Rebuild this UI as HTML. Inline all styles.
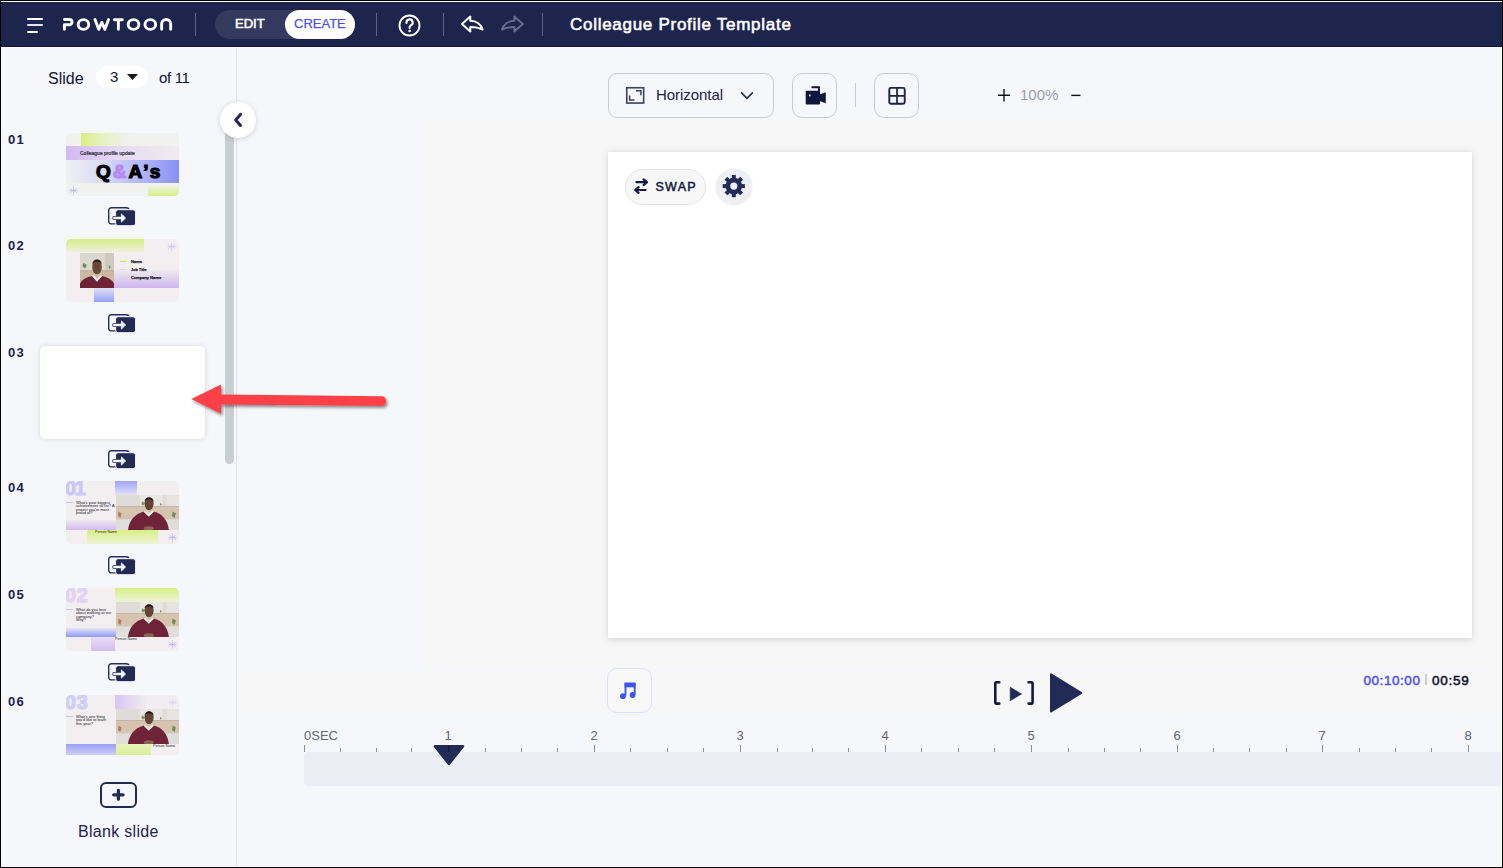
<!DOCTYPE html>
<html><head><meta charset="utf-8">
<style>
*{box-sizing:border-box;margin:0;padding:0}
html,body{width:1503px;height:868px;overflow:hidden;background:#000}
body{font-family:"Liberation Sans",sans-serif;position:relative}
.a{position:absolute}
.sep{position:absolute;width:1px;background:#5d6488}
.tb{position:absolute;border:1px solid #c8cad4;border-radius:10px;background:#f6f7fb}
.num{position:absolute;left:8px;margin-top:1px;font-size:13px;font-weight:bold;color:#1b2250;letter-spacing:1.2px}
.th{position:absolute;left:66px;width:113px;height:63px;border-radius:5px;overflow:hidden;background:#f3eff1}
.tr{position:absolute;left:108px;width:28px;height:19px}
.tick{position:absolute;width:1px;background:#8a8f9c}
.lbl{position:absolute;top:728px;font-size:13px;color:#5f6573}
</style></head>
<body>
<!-- frame -->
<div class="a" style="left:1px;top:1px;width:1501px;height:866px;background:#fff"></div>
<div class="a" style="left:2px;top:48px;width:1499px;height:818px;background:#f6f7fb"></div>

<!-- top bar -->
<div class="a" style="left:1px;top:2px;width:1501px;height:45px;background:#1e254d;border-bottom:1px solid #0c1444"></div>


<!-- hamburger -->
<div class="a" style="left:27px;top:18px;width:16px;height:2px;background:#fff;border-radius:1px"></div>
<div class="a" style="left:27px;top:24.4px;width:16px;height:2px;background:#e6e7ee;border-radius:1px"></div>
<div class="a" style="left:27px;top:31px;width:11px;height:2px;background:#fff;border-radius:1px"></div>
<!-- logo -->
<svg class="a" style="left:0;top:0" width="200" height="46" viewBox="0 0 200 46">
 <g fill="none" stroke="#fff" stroke-width="2.9" stroke-linecap="round" stroke-linejoin="round">
  <path d="M64.4 19.55 H69.4 A2.6 2.6 0 0 1 69.4 24.75 H64.4 V29.35"/>
  <ellipse cx="83.45" cy="24.5" rx="5.3" ry="4.85"/>
  <path d="M94.95 19.6 L98.7 29.35 L101.8 22.4 L104.9 29.35 L108.55 19.6"/>
  <path d="M114.45 19.75 H122.35 M118.4 19.75 V29.35"/>
  <ellipse cx="133.5" cy="24.5" rx="5.35" ry="4.85"/>
  <ellipse cx="150.3" cy="24.5" rx="5.35" ry="4.85"/>
  <path d="M161.65 29.35 V24.05 A4.5 4.5 0 0 1 170.65 24.05 V29.35"/>
 </g>
</svg>
<div class="sep" style="left:195px;top:13px;height:23px"></div>
<!-- toggle -->
<div class="a" style="left:215px;top:10px;width:140px;height:29px;border-radius:15px;background:#333a5e"></div>
<div class="a" style="left:285px;top:10px;width:70px;height:29px;border-radius:15px;background:#fff"></div>
<div class="a" style="left:235px;top:12px;line-height:23px;font-size:13px;color:#fff;-webkit-text-stroke:0.55px #fff">EDIT</div>
<div class="a" style="left:294px;top:12px;line-height:23px;font-size:13px;color:#4b4ff0;-webkit-text-stroke:0.25px #4b4ff0">CREATE</div>
<div class="sep" style="left:376px;top:13px;height:23px"></div>
<!-- help -->
<svg class="a" style="left:395px;top:11px" width="30" height="30" viewBox="0 0 30 30">
 <circle cx="14.5" cy="14.5" r="10" fill="none" stroke="#fff" stroke-width="1.9"/>
 <path d="M11.5 11.9 A3.1 3.1 0 1 1 15.8 14.4 C14.9 14.9 14.6 15.4 14.6 16.4 V17.1" fill="none" stroke="#fff" stroke-width="2.1" stroke-linecap="round"/>
 <circle cx="14.6" cy="19.9" r="1.25" fill="#fff"/>
</svg>
<div class="sep" style="left:443px;top:13px;height:23px"></div>
<!-- undo redo -->
<svg class="a" style="left:0;top:0" width="560" height="46" viewBox="0 0 560 46">
 <path d="M462 24 L470.3 16.6 V20.7 C476.5 20.9 481.2 24.5 482.6 29.6 C479.3 27.8 475.6 27 470.3 27 V31.6 Z" fill="none" stroke="#fff" stroke-width="2" stroke-linejoin="round"/>
 <path d="M522.7 24 L514.4 16.6 V20.7 C508.2 20.9 503.5 24.5 502.1 29.6 C505.4 27.8 509.1 27 514.4 27 V31.6 Z" fill="none" stroke="#666c8f" stroke-width="2" stroke-linejoin="round"/>
</svg>
<div class="sep" style="left:542px;top:13px;height:23px"></div>
<div class="a" style="left:570px;top:16px;line-height:17px;font-size:17px;color:#fff;letter-spacing:0.72px;white-space:nowrap;-webkit-text-stroke:0.55px #fff">Colleague Profile Template</div>


<!-- sidebar -->
<div class="a" style="left:236px;top:48px;width:1px;height:818px;background:#dfe1e8"></div>
<div class="a" style="left:48px;top:66.5px;line-height:24px;font-size:16px;color:#0f1433">Slide</div>
<div class="a" style="left:96px;top:66px;width:52px;height:22px;border-radius:11px;background:#fff"></div>
<div class="a" style="left:110px;top:65px;line-height:24px;font-size:15px;color:#0f1433">3</div>
<svg class="a" style="left:126px;top:73px" width="13" height="8" viewBox="0 0 13 8"><path d="M1 0.9 H12 L6.5 7 Z" fill="#1a1a1a"/></svg>
<div class="a" style="left:159px;top:66px;line-height:24px;font-size:15px;color:#0f1433;letter-spacing:-0.35px">of 11</div>

<div class="a" style="left:0;top:107px;width:236px;height:648px;overflow:hidden">
 <div class="a" style="left:-0px;top:-107px;width:236px;height:900px">
  <div class="num" style="top:131px">01</div>
  <div class="th" style="top:133px;background:#f1f1f0">
    <div class="a" style="left:15px;top:0;width:50px;height:13px;background:linear-gradient(90deg,#d9ef85,#e6f1bd 40%,rgba(241,241,240,0))"></div>
    <div class="a" style="left:0;top:13px;width:113px;height:14px;background:linear-gradient(90deg,#d2b9f1,#e6d9f2 45%,#f0ecf0)"></div>
    <div class="a" style="left:0;top:27px;width:113px;height:23px;background:linear-gradient(90deg,#f1f1f0,#d6d9f7 35%,#a8aef6 75%,#8790f2)"></div>
    <div class="a" style="left:82px;top:53px;width:31px;height:10px;background:linear-gradient(180deg,#f0f3dc,#d8ef8a)"></div>
    <div class="a" style="left:14px;top:16.5px;font-size:4.95px;line-height:7px;color:#2a2833;white-space:nowrap;letter-spacing:0.05px;-webkit-text-stroke:0.2px #2a2833">Colleague profile update</div>
    <div class="a" style="left:30px;top:27px;line-height:23px;font-size:19px;font-weight:bold;color:#000;letter-spacing:2px;font-family:'Liberation Sans';-webkit-text-stroke:1.2px #000">Q<span style="color:#b887f0;-webkit-text-stroke-color:#b887f0">&amp;</span>A&#8217;s</div>
    <svg class="a" style="left:3px;top:53px" width="9" height="9" viewBox="0 0 10 10"><g stroke="#b6b2ee" stroke-width="0.7" stroke-linecap="round"><path d="M5 0.8V9.2M1.4 2.9L8.6 7.1M1.4 7.1L8.6 2.9M0.8 5H9.2"/></g></svg>
  </div>
  <svg class="tr" style="top:207px" viewBox="0 0 28 19" width="28" height="19">
<rect x="0.7" y="0.7" width="20.2" height="16.2" rx="2.6" fill="none" stroke="#262f5a" stroke-width="1.4"/>
<rect x="7.6" y="2.7" width="20" height="16" rx="2.6" fill="#232b55" stroke="#f6f7fb" stroke-width="1"/>
<path d="M6.3 11 H15" stroke="#232b55" stroke-width="4.2" stroke-linecap="round"/>
<path d="M6.3 11 H15" stroke="#f6f7fb" stroke-width="2.4" stroke-linecap="round"/>
<path d="M13.4 6.9 L17.6 11 L13.4 15.1 Z" fill="#f6f7fb" stroke="#f6f7fb" stroke-width="0.8" stroke-linejoin="round"/>
</svg>

  <div class="num" style="top:237px">02</div>
  <div class="th" style="top:239px">
    <div class="a" style="left:0;top:0;width:78px;height:13px;background:linear-gradient(180deg,#d6ee86,#eef0dc)"></div>
    <div class="a" style="left:48px;top:30px;width:65px;height:19px;background:linear-gradient(180deg,#f1edf0,#cdb5ef)"></div>
    <div class="a" style="left:28px;top:49px;width:20px;height:14px;background:linear-gradient(180deg,#dfe1f6,#98a2f6)"></div>
    <svg class="a" style="left:14px;top:14px" width="34" height="35" viewBox="0 0 100 100" preserveAspectRatio="none">
<rect width="100" height="100" fill="#dcd8d0"/><rect x="74" width="26" height="50" fill="#cfc9c0"/><rect y="50" width="100" height="3" fill="#a99580"/><rect y="53" width="100" height="30" fill="#cdb8a2"/>
<path d="M10 28 L20 34 L15 44 L7 38Z" fill="#6f8a5c"/><path d="M84 34 L91 40 L86 46Z" fill="#6f8a5c"/>
<path d="M-5 100 C0 78 16 70 36 66 L50 78 L64 66 C84 70 100 78 105 100 Z" fill="#6e2339"/>
<path d="M35 66 L50 82 L65 66 L59 63 L50 74 L41 63Z" fill="#efebe7"/>
<ellipse cx="50" cy="40" rx="14" ry="21" fill="#6a4738"/><path d="M36 32 C37 15 63 13 64 32 C58 22 42 22 36 32Z" fill="#261a15"/>
</svg>
    <div class="a" style="left:54px;top:22px;width:7px;height:1px;background:#cde87a"></div>
    <div class="a" style="left:54px;top:30px;width:7px;height:1px;background:#ddd"></div>
    <div class="a" style="left:54px;top:38px;width:7px;height:1px;background:#d8d0ee"></div>
    <div class="a" style="left:65px;top:20px;font-size:4.2px;line-height:5px;color:#111;white-space:nowrap;-webkit-text-stroke:0.25px #111">Name</div>
    <div class="a" style="left:65px;top:28px;font-size:4.2px;line-height:5px;color:#111;white-space:nowrap;-webkit-text-stroke:0.25px #111">Job Title</div>
    <div class="a" style="left:65px;top:36px;font-size:4.2px;line-height:5px;color:#111;white-space:nowrap;-webkit-text-stroke:0.25px #111">Company Name</div>
    <svg class="a" style="left:101px;top:3px" width="9" height="9" viewBox="0 0 10 10"><g stroke="#c8c2f2" stroke-width="0.7" stroke-linecap="round"><path d="M5 0.8V9.2M1.4 2.9L8.6 7.1M1.4 7.1L8.6 2.9M0.8 5H9.2"/></g></svg>
  </div>
  <svg class="tr" style="top:314px" viewBox="0 0 28 19" width="28" height="19">
<rect x="0.7" y="0.7" width="20.2" height="16.2" rx="2.6" fill="none" stroke="#262f5a" stroke-width="1.4"/>
<rect x="7.6" y="2.7" width="20" height="16" rx="2.6" fill="#232b55" stroke="#f6f7fb" stroke-width="1"/>
<path d="M6.3 11 H15" stroke="#232b55" stroke-width="4.2" stroke-linecap="round"/>
<path d="M6.3 11 H15" stroke="#f6f7fb" stroke-width="2.4" stroke-linecap="round"/>
<path d="M13.4 6.9 L17.6 11 L13.4 15.1 Z" fill="#f6f7fb" stroke="#f6f7fb" stroke-width="0.8" stroke-linejoin="round"/>
</svg>

  <div class="num" style="top:344px">03</div>
  <div class="a" style="left:40px;top:346px;width:165px;height:93px;border-radius:5px;background:#fff;box-shadow:0 0 5px rgba(40,45,70,0.16)"></div>
  <svg class="tr" style="top:450px" viewBox="0 0 28 19" width="28" height="19">
<rect x="0.7" y="0.7" width="20.2" height="16.2" rx="2.6" fill="none" stroke="#262f5a" stroke-width="1.4"/>
<rect x="7.6" y="2.7" width="20" height="16" rx="2.6" fill="#232b55" stroke="#f6f7fb" stroke-width="1"/>
<path d="M6.3 11 H15" stroke="#232b55" stroke-width="4.2" stroke-linecap="round"/>
<path d="M6.3 11 H15" stroke="#f6f7fb" stroke-width="2.4" stroke-linecap="round"/>
<path d="M13.4 6.9 L17.6 11 L13.4 15.1 Z" fill="#f6f7fb" stroke="#f6f7fb" stroke-width="0.8" stroke-linejoin="round"/>
</svg>

  <div class="num" style="top:479px">04</div>
  <div class="th" style="top:481px">
    <div class="a" style="left:49px;top:0;width:22px;height:14px;background:linear-gradient(180deg,#9ea5f7,#e3e2f4)"></div>
    <div class="a" style="left:0;top:39px;width:50px;height:10px;background:linear-gradient(180deg,#efeaf2,#d2bbf1)"></div>
    <div class="a" style="left:21px;top:49px;width:71px;height:14px;background:linear-gradient(180deg,#d8ef86,#eef2d5)"></div>
    <svg class="a" style="left:50px;top:14px" width="63" height="35" viewBox="0 0 100 55" preserveAspectRatio="none">
<rect width="100" height="55" fill="#dfdcd7"/><rect x="38" width="36" height="18" fill="#e9e7e3"/><rect x="80" width="20" height="18" fill="#e6e4e0"/><rect y="18" width="100" height="1.2" fill="#a99680"/><rect y="19.2" width="100" height="18" fill="#d6c4ae"/><rect y="37.2" width="100" height="1.2" fill="#c4b6a6"/><rect y="38.4" width="100" height="16.6" fill="#e0dedb"/>
<path d="M42 10 L46 13 L43 17 L40 14Z" fill="#789166"/><path d="M70 12 L73 15 L70 17Z" fill="#6d8a5a"/><path d="M90 26 L95 29 L93 36 L89 33Z" fill="#6d8a5a"/><path d="M4 26 L9 29 L7 36 L3 33Z" fill="#b0806a"/>
<path d="M19 55 C21 40 30 30 44 26 L52 32 L60 26 C73 29 82 39 84 55 Z" fill="#6e2339"/>
<path d="M43.5 26 L52 34 L60.5 26 L57.5 25 L52 30 L46.5 25Z" fill="#f0ece8"/>
<ellipse cx="52.5" cy="13.5" rx="7.2" ry="10.5" fill="#634335"/><path d="M45.3 10 C45.6 2 59.4 1.5 59.7 10 C56.5 6 48.5 6 45.3 10Z" fill="#231914"/>
<ellipse cx="52" cy="52.5" rx="8" ry="3.2" fill="#8a6553"/>
</svg>
    <div class="a" style="left:-1px;top:-1px;line-height:17px;font-size:19.5px;font-weight:bold;color:#c6c8f5;letter-spacing:-1.2px;-webkit-text-stroke:1px #c6c8f5">01</div>
    <div class="a" style="left:0;top:21px;width:7px;height:1px;background:#c9c5ef"></div>
    <div class="a" style="left:10px;top:20px;width:40px;font-size:3.9px;line-height:3.4px;color:#111;white-space:pre">What's your biggest
achievement so far? A
project you're most
proud of?</div>
    <div class="a" style="left:29px;top:48.5px;font-size:3.6px;line-height:4px;color:#222;white-space:nowrap">Person Name</div>
    <svg class="a" style="left:102px;top:52px" width="9" height="9" viewBox="0 0 10 10"><g stroke="#b7b0f0" stroke-width="0.7" stroke-linecap="round"><path d="M5 0.8V9.2M1.4 2.9L8.6 7.1M1.4 7.1L8.6 2.9M0.8 5H9.2"/></g></svg>
  </div>
  <svg class="tr" style="top:556px" viewBox="0 0 28 19" width="28" height="19">
<rect x="0.7" y="0.7" width="20.2" height="16.2" rx="2.6" fill="none" stroke="#262f5a" stroke-width="1.4"/>
<rect x="7.6" y="2.7" width="20" height="16" rx="2.6" fill="#232b55" stroke="#f6f7fb" stroke-width="1"/>
<path d="M6.3 11 H15" stroke="#232b55" stroke-width="4.2" stroke-linecap="round"/>
<path d="M6.3 11 H15" stroke="#f6f7fb" stroke-width="2.4" stroke-linecap="round"/>
<path d="M13.4 6.9 L17.6 11 L13.4 15.1 Z" fill="#f6f7fb" stroke="#f6f7fb" stroke-width="0.8" stroke-linejoin="round"/>
</svg>

  <div class="num" style="top:586px">05</div>
  <div class="th" style="top:588px">
    <div class="a" style="left:49px;top:0;width:64px;height:14px;background:linear-gradient(180deg,#d7ef86,#eef2d6)"></div>
    <div class="a" style="left:0;top:40px;width:50px;height:9px;background:linear-gradient(180deg,#e6e6f6,#9098f4)"></div>
    <div class="a" style="left:25px;top:49px;width:24px;height:14px;background:linear-gradient(180deg,#e9def4,#d3bdf1)"></div>
    <svg class="a" style="left:50px;top:14px" width="63" height="35" viewBox="0 0 100 55" preserveAspectRatio="none">
<rect width="100" height="55" fill="#dfdcd7"/><rect x="38" width="36" height="18" fill="#e9e7e3"/><rect x="80" width="20" height="18" fill="#e6e4e0"/><rect y="18" width="100" height="1.2" fill="#a99680"/><rect y="19.2" width="100" height="18" fill="#d6c4ae"/><rect y="37.2" width="100" height="1.2" fill="#c4b6a6"/><rect y="38.4" width="100" height="16.6" fill="#e0dedb"/>
<path d="M42 10 L46 13 L43 17 L40 14Z" fill="#789166"/><path d="M70 12 L73 15 L70 17Z" fill="#6d8a5a"/><path d="M90 26 L95 29 L93 36 L89 33Z" fill="#6d8a5a"/><path d="M4 26 L9 29 L7 36 L3 33Z" fill="#b0806a"/>
<path d="M19 55 C21 40 30 30 44 26 L52 32 L60 26 C73 29 82 39 84 55 Z" fill="#6e2339"/>
<path d="M43.5 26 L52 34 L60.5 26 L57.5 25 L52 30 L46.5 25Z" fill="#f0ece8"/>
<ellipse cx="52.5" cy="13.5" rx="7.2" ry="10.5" fill="#634335"/><path d="M45.3 10 C45.6 2 59.4 1.5 59.7 10 C56.5 6 48.5 6 45.3 10Z" fill="#231914"/>
<ellipse cx="52" cy="52.5" rx="8" ry="3.2" fill="#8a6553"/>
</svg>
    <div class="a" style="left:-1px;top:-1px;line-height:17px;font-size:19.5px;font-weight:bold;color:#e0d3f5;letter-spacing:1px;-webkit-text-stroke:1.4px #e0d3f5">02</div>
    <div class="a" style="left:0;top:21px;width:7px;height:1px;background:#c9c5ef"></div>
    <div class="a" style="left:10px;top:20px;width:40px;font-size:3.9px;line-height:3.4px;color:#111;white-space:pre">What do you love
about working at our
company?
Why?</div>
    <div class="a" style="left:49px;top:48.5px;font-size:3.6px;line-height:4px;color:#222;white-space:nowrap">Person Name</div>
    <svg class="a" style="left:102px;top:52px" width="9" height="9" viewBox="0 0 10 10"><g stroke="#b7b0f0" stroke-width="0.7" stroke-linecap="round"><path d="M5 0.8V9.2M1.4 2.9L8.6 7.1M1.4 7.1L8.6 2.9M0.8 5H9.2"/></g></svg>
  </div>
  <svg class="tr" style="top:663px" viewBox="0 0 28 19" width="28" height="19">
<rect x="0.7" y="0.7" width="20.2" height="16.2" rx="2.6" fill="none" stroke="#262f5a" stroke-width="1.4"/>
<rect x="7.6" y="2.7" width="20" height="16" rx="2.6" fill="#232b55" stroke="#f6f7fb" stroke-width="1"/>
<path d="M6.3 11 H15" stroke="#232b55" stroke-width="4.2" stroke-linecap="round"/>
<path d="M6.3 11 H15" stroke="#f6f7fb" stroke-width="2.4" stroke-linecap="round"/>
<path d="M13.4 6.9 L17.6 11 L13.4 15.1 Z" fill="#f6f7fb" stroke="#f6f7fb" stroke-width="0.8" stroke-linejoin="round"/>
</svg>

  <div class="num" style="top:693px">06</div>
  <div class="th" style="top:695px;border-radius:5px 5px 0 0">
    <div class="a" style="left:49px;top:0;width:64px;height:14px;background:linear-gradient(90deg,#d8c5f4,#f1edf0 50%)"></div>
    <div class="a" style="left:0;top:49px;width:50px;height:14px;background:linear-gradient(180deg,#9aa0f6,#dcdcf4)"></div>
    <div class="a" style="left:50px;top:49px;width:35px;height:14px;background:linear-gradient(180deg,#e6f3bf,#d8ef8a)"></div>
    <svg class="a" style="left:50px;top:14px" width="63" height="35" viewBox="0 0 100 55" preserveAspectRatio="none">
<rect width="100" height="55" fill="#dfdcd7"/><rect x="38" width="36" height="18" fill="#e9e7e3"/><rect x="80" width="20" height="18" fill="#e6e4e0"/><rect y="18" width="100" height="1.2" fill="#a99680"/><rect y="19.2" width="100" height="18" fill="#d6c4ae"/><rect y="37.2" width="100" height="1.2" fill="#c4b6a6"/><rect y="38.4" width="100" height="16.6" fill="#e0dedb"/>
<path d="M42 10 L46 13 L43 17 L40 14Z" fill="#789166"/><path d="M70 12 L73 15 L70 17Z" fill="#6d8a5a"/><path d="M90 26 L95 29 L93 36 L89 33Z" fill="#6d8a5a"/><path d="M4 26 L9 29 L7 36 L3 33Z" fill="#b0806a"/>
<path d="M19 55 C21 40 30 30 44 26 L52 32 L60 26 C73 29 82 39 84 55 Z" fill="#6e2339"/>
<path d="M43.5 26 L52 34 L60.5 26 L57.5 25 L52 30 L46.5 25Z" fill="#f0ece8"/>
<ellipse cx="52.5" cy="13.5" rx="7.2" ry="10.5" fill="#634335"/><path d="M45.3 10 C45.6 2 59.4 1.5 59.7 10 C56.5 6 48.5 6 45.3 10Z" fill="#231914"/>
<ellipse cx="52" cy="52.5" rx="8" ry="3.2" fill="#8a6553"/>
</svg>
    <div class="a" style="left:-1px;top:-1px;line-height:17px;font-size:19.5px;font-weight:bold;color:#cfd0f6;letter-spacing:1px;-webkit-text-stroke:1.4px #cfd0f6">03</div>
    <div class="a" style="left:0;top:21px;width:7px;height:1px;background:#c9c5ef"></div>
    <div class="a" style="left:10px;top:20px;width:40px;font-size:3.9px;line-height:3.4px;color:#111;white-space:pre">What's one thing
you'd like to learn
this year?</div>
    <div class="a" style="left:87px;top:48.5px;font-size:3.6px;line-height:4px;color:#222;white-space:nowrap">Person Name</div>
    <svg class="a" style="left:102px;top:3px" width="9" height="9" viewBox="0 0 10 10"><g stroke="#d6d0f4" stroke-width="0.7" stroke-linecap="round"><path d="M5 0.8V9.2M1.4 2.9L8.6 7.1M1.4 7.1L8.6 2.9M0.8 5H9.2"/></g></svg>
  </div>
 </div>
</div>

<!-- scrollbar -->
<div class="a" style="left:225px;top:110px;width:9px;height:354px;border-radius:4.5px;background:#c9ced3"></div>
<!-- collapse -->
<div class="a" style="left:220px;top:102px;width:36px;height:36px;border-radius:50%;background:#fff;box-shadow:0 1px 5px rgba(30,35,70,0.18)"></div>
<svg class="a" style="left:230px;top:110px" width="16" height="20" viewBox="0 0 16 20"><path d="M10.5 4.4 L5.7 9.9 L10.5 15.4" fill="none" stroke="#222a55" stroke-width="3.1" stroke-linecap="round" stroke-linejoin="round"/></svg>

<!-- blank slide -->
<div class="a" style="left:100px;top:782px;width:37px;height:26px;border:2.4px solid #232b55;border-radius:6px"></div>
<svg class="a" style="left:100px;top:782px" width="37" height="26" viewBox="0 0 37 26"><path d="M18.4 8.4 V17.2 M13.7 12.8 H23.1" stroke="#232b55" stroke-width="3.3" stroke-linecap="round"/></svg>
<div class="a" style="left:78px;top:821.5px;line-height:20px;font-size:16px;color:#1d2450;letter-spacing:0.3px">Blank slide</div>


<!-- main -->
<div class="a" style="left:423px;top:119px;width:1078px;height:551px;background:#f7f7f8"></div>
<div class="a" style="left:240px;top:673px;width:1261px;height:40px;background:#f7f7f8"></div>

<!-- toolbar -->
<div class="tb" style="left:608px;top:73px;width:166px;height:45px;border-radius:9px"></div>
<svg class="a" style="left:624px;top:85px" width="22" height="20" viewBox="0 0 22 20">
 <rect x="2.75" y="2.75" width="16.9" height="15.3" fill="none" stroke="#3a405f" stroke-width="1.6"/>
 <path d="M11.8 5.8 H16.9 V10.3 M5.6 10.5 V15 H10.5" fill="none" stroke="#3a405f" stroke-width="1.5"/>
</svg>
<div class="a" style="left:656px;top:85px;line-height:20px;font-size:15px;color:#1c2247;letter-spacing:-0.05px">Horizontal</div>
<svg class="a" style="left:738px;top:88px" width="18" height="14" viewBox="0 0 18 14"><path d="M3.6 4.9 L9 10.4 L14.4 4.9" fill="none" stroke="#2b3150" stroke-width="1.7" stroke-linecap="round" stroke-linejoin="round"/></svg>

<div class="tb" style="left:792px;top:73px;width:45px;height:45px"></div>
<svg class="a" style="left:802px;top:84px" width="26" height="24" viewBox="0 0 26 24">
 <path d="M9.5 3.3 H17 V7" fill="none" stroke="#0f1640" stroke-width="1.9"/>
 <rect x="3.7" y="6.8" width="14.3" height="13.7" rx="1" fill="#0f1640"/>
 <path d="M17.5 10.5 L23.8 8.2 V19.2 L17.5 17 Z" fill="#0f1640"/>
 <rect x="7" y="10.5" width="1.6" height="1.8" fill="#f6f7fb"/>
</svg>
<div class="a" style="left:855px;top:83px;width:1px;height:24px;background:#c8cad4"></div>
<div class="tb" style="left:874px;top:73px;width:45px;height:45px"></div>
<svg class="a" style="left:886px;top:85px" width="22" height="22" viewBox="0 0 22 22">
 <rect x="3.3" y="2.9" width="15.4" height="15.8" rx="1.5" fill="none" stroke="#1b2249" stroke-width="1.9"/>
 <path d="M11 3 V18.6 M3.3 10.8 H18.7" stroke="#1b2249" stroke-width="1.7"/>
</svg>
<svg class="a" style="left:996px;top:88px" width="16" height="15" viewBox="0 0 16 15"><path d="M8 1 V13.6 M2 7.3 H14" stroke="#111" stroke-width="1.4"/></svg>
<div class="a" style="left:1020px;top:84.5px;line-height:20px;font-size:15px;color:#9a9eac">100%</div>
<svg class="a" style="left:1070px;top:88px" width="12" height="15" viewBox="0 0 12 15"><path d="M1.3 7.4 H10.5" stroke="#111" stroke-width="1.4"/></svg>

<!-- canvas -->
<div class="a" style="left:608px;top:152px;width:864px;height:486px;background:#fff;box-shadow:0 1px 7px rgba(0,0,0,0.17)"></div>
<div class="a" style="left:625px;top:169px;width:81px;height:36px;border-radius:18px;background:#f7f7f7;border:1px solid #e4e4e6"></div>
<svg class="a" style="left:632px;top:177px" width="18" height="19" viewBox="0 0 18 19">
 <path d="M4.5 5.2 H14.8 M11.6 2.3 L15 5.2 L11.6 8.1" fill="none" stroke="#111a44" stroke-width="2.2" stroke-linecap="round" stroke-linejoin="round"/>
 <path d="M13.6 13 H3.4 M6.6 10.1 L3.2 13 L6.6 15.9" fill="none" stroke="#111a44" stroke-width="2.2" stroke-linecap="round" stroke-linejoin="round"/>
</svg>
<div class="a" style="left:655.5px;top:177px;line-height:20px;font-size:12.5px;color:#131a44;letter-spacing:1.25px;-webkit-text-stroke:0.5px #131a44">SWAP</div>
<div class="a" style="left:716px;top:169px;width:36px;height:36px;border-radius:50%;background:#eeeff2;box-shadow:0 0 3px rgba(0,0,0,0.08)"></div>
<svg class="a" style="left:722px;top:174px" width="24" height="24" viewBox="0 0 24 24">
 <g fill="#232c57" transform="translate(11.8 12.1)">
  <circle r="8.3"/>
  <rect x="-2" y="-11.1" width="4" height="4.5" />
  <rect x="-2" y="-11.1" width="4" height="4.5" transform="rotate(45)"/>
  <rect x="-2" y="-11.1" width="4" height="4.5" transform="rotate(90)"/>
  <rect x="-2" y="-11.1" width="4" height="4.5" transform="rotate(135)"/>
  <rect x="-2" y="-11.1" width="4" height="4.5" transform="rotate(180)"/>
  <rect x="-2" y="-11.1" width="4" height="4.5" transform="rotate(225)"/>
  <rect x="-2" y="-11.1" width="4" height="4.5" transform="rotate(270)"/>
  <rect x="-2" y="-11.1" width="4" height="4.5" transform="rotate(315)"/>
  <circle r="3.6" fill="#eeeff2"/>
 </g>
</svg>

<!-- controls -->
<div class="a" style="left:607px;top:668px;width:45px;height:45px;border-radius:10px;border:1px solid #dde1fa;background:#f8f8f9"></div>
<svg class="a" style="left:610px;top:670px" width="40" height="40" viewBox="610 670 40 40">
 <path d="M625.5 695.5 V683.6 H634.7 V694.2" fill="none" stroke="#3c55f0" stroke-width="1.9"/>
 <rect x="624.6" y="682.7" width="11" height="4.6" fill="#3c55f0"/>
 <circle cx="622.9" cy="696.2" r="2.9" fill="#3c55f0"/>
 <circle cx="632.6" cy="695" r="2.9" fill="#3c55f0"/>
</svg>
<svg class="a" style="left:985px;top:665px" width="110" height="55" viewBox="985 665 110 55">
 <path d="M999.3 682.2 H996.6 Q995.3 682.2 995.3 683.5 V702.3 Q995.3 703.6 996.6 703.6 H999.3" fill="none" stroke="#111a44" stroke-width="2.6" stroke-linecap="round"/>
 <path d="M1028.6 682.2 H1031.3 Q1032.6 682.2 1032.6 683.5 V702.3 Q1032.6 703.6 1031.3 703.6 H1028.6" fill="none" stroke="#111a44" stroke-width="2.6" stroke-linecap="round"/>
 <path d="M1010.2 687.2 L1021.6 694 L1010.2 700.8 Z" fill="#222b55" stroke="#222b55" stroke-width="0.6" stroke-linejoin="round"/>
 <path d="M1051.6 673.6 Q1050 672.7 1050 674.6 V711.2 Q1050 713.1 1051.6 712.2 L1081.6 693.9 Q1083.2 692.9 1081.6 691.9 Z" fill="#222b55"/>
</svg>
<div class="a" style="left:1363.5px;top:670.5px;line-height:20px;font-size:13.5px;color:#4b50f2;letter-spacing:0.55px;-webkit-text-stroke:0.45px #4b50f2">00:10:00</div>
<div class="a" style="left:1425px;top:674px;width:2px;height:11px;background:#c8ccd6"></div>
<div class="a" style="left:1432px;top:670.5px;line-height:20px;font-size:13.5px;color:#0e1230;letter-spacing:0.75px;-webkit-text-stroke:0.5px #0e1230">00:59</div>

<!-- timeline -->
<div class="lbl" style="left:304px">0SEC</div><div class="lbl" style="left:438px;width:20px;text-align:center">1</div><div class="lbl" style="left:584px;width:20px;text-align:center">2</div><div class="lbl" style="left:730px;width:20px;text-align:center">3</div><div class="lbl" style="left:875px;width:20px;text-align:center">4</div><div class="lbl" style="left:1021px;width:20px;text-align:center">5</div><div class="lbl" style="left:1167px;width:20px;text-align:center">6</div><div class="lbl" style="left:1312px;width:20px;text-align:center">7</div><div class="lbl" style="left:1458px;width:20px;text-align:center">8</div>
<div class="tick" style="left:304px;top:745px;height:7px"></div><div class="tick" style="left:448px;top:745px;height:7px"></div><div class="tick" style="left:594px;top:745px;height:7px"></div><div class="tick" style="left:740px;top:745px;height:7px"></div><div class="tick" style="left:885px;top:745px;height:7px"></div><div class="tick" style="left:1031px;top:745px;height:7px"></div><div class="tick" style="left:1177px;top:745px;height:7px"></div><div class="tick" style="left:1322px;top:745px;height:7px"></div><div class="tick" style="left:1468px;top:745px;height:7px"></div><div class="tick" style="left:340px;top:748px;height:4px"></div><div class="tick" style="left:376px;top:748px;height:4px"></div><div class="tick" style="left:411px;top:748px;height:4px"></div><div class="tick" style="left:485px;top:748px;height:4px"></div><div class="tick" style="left:521px;top:748px;height:4px"></div><div class="tick" style="left:557px;top:748px;height:4px"></div><div class="tick" style="left:630px;top:748px;height:4px"></div><div class="tick" style="left:667px;top:748px;height:4px"></div><div class="tick" style="left:703px;top:748px;height:4px"></div><div class="tick" style="left:777px;top:748px;height:4px"></div><div class="tick" style="left:812px;top:748px;height:4px"></div><div class="tick" style="left:848px;top:748px;height:4px"></div><div class="tick" style="left:921px;top:748px;height:4px"></div><div class="tick" style="left:958px;top:748px;height:4px"></div><div class="tick" style="left:994px;top:748px;height:4px"></div><div class="tick" style="left:1068px;top:748px;height:4px"></div><div class="tick" style="left:1104px;top:748px;height:4px"></div><div class="tick" style="left:1140px;top:748px;height:4px"></div><div class="tick" style="left:1213px;top:748px;height:4px"></div><div class="tick" style="left:1249px;top:748px;height:4px"></div><div class="tick" style="left:1286px;top:748px;height:4px"></div><div class="tick" style="left:1359px;top:748px;height:4px"></div><div class="tick" style="left:1395px;top:748px;height:4px"></div><div class="tick" style="left:1431px;top:748px;height:4px"></div>


<div class="a" style="left:304px;top:752px;width:1197px;height:34px;border-radius:4px 0 0 4px;background:#eceef6"></div>
<svg class="a" style="left:430px;top:742px" width="38" height="26" viewBox="0 0 38 26">
 <path d="M5.4 3 H32.6 Q35.6 3 33.6 5.4 L20.3 22.3 Q18.9 24 17.5 22.3 L4.3 5.4 Q2.4 3 5.4 3 Z" fill="#222b55"/>
 <path d="M18.9 3 V10" stroke="#0d1334" stroke-width="1"/>
</svg>

<!-- red arrow -->
<svg class="a" style="left:180px;top:370px" width="220" height="60" viewBox="0 0 220 60">
 <defs><filter id="sh" x="-20%" y="-50%" width="140%" height="200%"><feDropShadow dx="1.5" dy="2" stdDeviation="1.6" flood-color="#000" flood-opacity="0.45"/></filter></defs>
 <g filter="url(#sh)" fill="#fc4146">
  <path d="M40 24.5 L201 26.3 Q206 26.4 206 31.2 Q206 36 201 36 L40 34.6 Z"/>
  <path d="M11.3 29 L41 14.5 L41 43.8 Z"/>
 </g>
</svg>

</body></html>
